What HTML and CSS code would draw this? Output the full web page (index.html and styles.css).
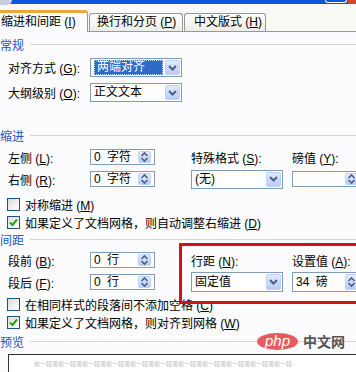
FILE: index.html
```html
<!DOCTYPE html>
<html lang="zh-CN">

<head>
    <meta charset="UTF-8" />
    <meta name="viewport" content="width=device-width, initial-scale=1.0" />
    <title>段落</title>
    <link rel="stylesheet" href="styles.css">
</head>

<body>
    <div class="dialog">
        <!-- 标题栏底边 -->
        <div class="titlebar">
            <span class="tb-corner"></span>
            <span class="tb-fill"></span>
            <span class="tb-btn"></span>
            <span class="tb-close"></span>
        </div>
        <!-- 选项卡 -->
        <div class="tabs">
            <div class="tab t1 active">缩进和间距 (<u>I</u>)</div>
            <div class="tab t2">换行和分页 (<u>P</u>)</div>
            <div class="tab t3">中文版式 (<u>H</u>)</div>
        </div>

        <div class="panel">
            <div class="group">常规</div>
            <div class="row first">
                <span class="lbl">对齐方式 (<u>G</u>):</span>
                <div class="select w-md">
                    <span class="val"><span class="sel">两端对齐</span></span>
                    <span class="drop"><svg width="9" height="6" viewBox="0 0 9 6"><path d="M1 1l3.5 3.5L8 1" /></svg></span>
                </div>
            </div>
            <div class="row">
                <span class="lbl">大纲级别 (<u>O</u>):</span>
                <div class="select w-md">
                    <span class="val">正文文本</span>
                    <span class="drop"><svg width="9" height="6" viewBox="0 0 9 6"><path d="M1 1l3.5 3.5L8 1" /></svg></span>
                </div>
            </div>

            <div class="group g-indent">缩进</div>
            <div class="grid g1">
                <span class="lbl">左侧 (<u>L</u>):</span>
                <div class="spin"><span class="val">0 字符</span><span class="arrows"><svg width="9" height="12" viewBox="0 0 9 12"><path d="M1.5 5l3-3 3 3M1.5 7l3 3 3-3" /></svg></span></div>
                <span class="lbl">特殊格式 (<u>S</u>):</span>
                <span class="lbl">磅值 (<u>Y</u>):</span>

                <span class="lbl">右侧 (<u>R</u>):</span>
                <div class="spin"><span class="val">0 字符</span><span class="arrows"><svg width="9" height="12" viewBox="0 0 9 12"><path d="M1.5 5l3-3 3 3M1.5 7l3 3 3-3" /></svg></span></div>
                <div class="select w-md">
                    <span class="val">(无)</span>
                    <span class="drop"><svg width="9" height="6" viewBox="0 0 9 6"><path d="M1 1l3.5 3.5L8 1" /></svg></span>
                </div>
                <div class="spin wide"><span class="val"></span><span class="arrows"><svg width="9" height="12" viewBox="0 0 9 12"><path d="M1.5 5l3-3 3 3M1.5 7l3 3 3-3" /></svg></span></div>
            </div>

            <div class="check c1"><span class="box"></span><span>对称缩进 (<u>M</u>)</span></div>
            <div class="check"><span class="box on"><svg width="11" height="11" viewBox="0 0 11 11"><path d="M2 5.5l2.5 2.5L9 2.5" /></svg></span><span>如果定义了文档网格，则自动调整右缩进 (<u>D</u>)</span></div>

            <div class="group g-space">间距</div>
            <div class="grid g2">
                <span class="lbl">段前 (<u>B</u>):</span>
                <div class="spin"><span class="val">0 行</span><span class="arrows"><svg width="9" height="12" viewBox="0 0 9 12"><path d="M1.5 5l3-3 3 3M1.5 7l3 3 3-3" /></svg></span></div>
                <span class="lbl">行距 (<u>N</u>):</span>
                <span class="lbl">设置值 (<u>A</u>):</span>

                <span class="lbl">段后 (<u>F</u>):</span>
                <div class="spin"><span class="val">0 行</span><span class="arrows"><svg width="9" height="12" viewBox="0 0 9 12"><path d="M1.5 5l3-3 3 3M1.5 7l3 3 3-3" /></svg></span></div>
                <div class="select w-md tall">
                    <span class="val">固定值</span>
                    <span class="drop"><svg width="9" height="6" viewBox="0 0 9 6"><path d="M1 1l3.5 3.5L8 1" /></svg></span>
                </div>
                <div class="spin wide tall"><span class="val">34 磅</span><span class="arrows"><svg width="9" height="12" viewBox="0 0 9 12"><path d="M1.5 5l3-3 3 3M1.5 7l3 3 3-3" /></svg></span></div>
            </div>

            <div class="check c3"><span class="box"></span><span>在相同样式的段落间不添加空格 (<u>C</u>)</span></div>
            <div class="check"><span class="box on"><svg width="11" height="11" viewBox="0 0 11 11"><path d="M2 5.5l2.5 2.5L9 2.5" /></svg></span><span>如果定义了文档网格，则对齐到网格 (<u>W</u>)</span></div>

            <div class="group g-preview">预览</div>
            <div class="preview">
                <p>前一段落前一段落前一段落前一段落前一段落前一段落前一段落前一段落前一段落前一段落前一段</p>
            </div>
        </div>

        <!-- 红框标注 -->
        <div class="mark"></div>
        <!-- 水印 -->
        <div class="logo"><span class="php">php</span><span class="cn">中文网</span></div>
    </div>
</body>

</html>
```

FILE: styles.css
```css
* {
    margin: 0;
    padding: 0;
    box-sizing: border-box;
}

body {
    width: 356px;
    height: 372px;
    overflow: hidden;
    background-color: #fcfcfe;
    font-family: "Liberation Sans", "Noto Sans CJK SC", sans-serif;
    font-size: 12px;
    color: #000;
}

u {
    text-decoration: underline;
    text-underline-offset: 1px;
}

.dialog {
    position: relative;
    height: 372px;
    overflow: hidden;
}

/* 标题栏 */
.titlebar {
    display: flex;
    height: 4px;
    background-color: #0b55d9;
}

.tb-corner {
    width: 12px;
    height: 5px;
    background-color: #c7d0e2;
    border-bottom-right-radius: 8px;
}

.tb-fill {
    flex: 1;
}

.tb-btn {
    width: 22px;
    height: 3px;
    border: 1px solid #fff;
    border-top: 0;
    border-radius: 0 0 3px 3px;
    margin-right: 1px;
}

.tb-close {
    width: 8px;
    background-color: #d8452a;
}

/* 选项卡 */
.tabs {
    display: flex;
    align-items: flex-end;
    height: 28px;
    background-color: #f9f9f5;
    border-bottom: 1px solid #919b9c;
}

.tab {
    height: 18px;
    line-height: 17px;
    border: 1px solid #919b9c;
    border-bottom: 0;
    border-radius: 3px 3px 0 0;
    background: linear-gradient(#ffffff, #eeede7);
    white-space: nowrap;
    margin-left: 1px;
}

.t1 {
    width: 88px;
    padding-left: 1px;
}

.t2 {
    width: 94px;
    padding-left: 7px;
}

.t3 {
    width: 82px;
    padding-left: 9px;
}

.tab.active {
    height: 22px;
    margin-left: 0;
    margin-bottom: -1px;
    line-height: 18px;
    background: #fcfcfe;
    border-left: 0;
    border-top: 3px solid #f0a53a;
    border-radius: 0 3px 0 0;
}

/* 面板 */
.panel {
    padding-left: 8px;
}

.group {
    display: flex;
    align-items: center;
    height: 16px;
    margin: 4px 0 0 -8px;
    color: #2155c5;
}

.group::after {
    content: "";
    flex: 1;
    height: 1px;
    margin-left: 6px;
    background-color: #d5d4c6;
}

.g-indent {
    margin-top: 25px;
}

.g-space {
    margin-top: 2px;
}

.g-preview {
    margin-top: 4px;
}

.row {
    display: flex;
    align-items: center;
    height: 19px;
    margin-top: 6px;
}

.lbl {
    width: 82px;
    white-space: nowrap;
}

.grid {
    display: grid;
    grid-template-columns: 82px 101px 101px 1fr;
    align-items: center;
    row-gap: 5px;
    margin-top: 6px;
}

.g1 {
    grid-template-rows: 16px 18px;
}

.g2 {
    grid-template-rows: 16px 20px;
    row-gap: 4px;
    margin-top: 5px;
}

/* 下拉框 */
.select {
    display: flex;
    align-items: center;
    height: 19px;
    padding: 1px;
    border: 1px solid #7f9db9;
    background-color: #fff;
}

.w-md {
    width: 92px;
}

.tall {
    height: 20px;
}

.select .val {
    flex: 1;
    padding-left: 2px;
    line-height: 15px;
    white-space: nowrap;
}

.sel {
    display: inline-block;
    width: 69px;
    padding-left: 3px;
    background-color: #316ac5;
    color: #fff;
    outline: 1px dotted #c8d6f0;
    outline-offset: -1px;
}

.drop,
.arrows {
    display: flex;
    align-items: center;
    justify-content: center;
    align-self: stretch;
    width: 15px;
    border: 1px solid #c0d0f6;
    border-radius: 2px;
    background: linear-gradient(#e3eafd, #b9cbf5);
}

.drop path {
    fill: none;
    stroke: #4b5f8a;
    stroke-width: 2;
}

/* 微调框 */
.spin {
    display: flex;
    align-items: center;
    width: 65px;
    height: 16px;
    padding: 1px;
    border: 1px solid #7f9db9;
    background-color: #fff;
}

.spin.wide {
    width: 70px;
}

.spin.tall {
    height: 20px;
}

.spin .val {
    flex: 1;
    padding-left: 2px;
    line-height: 13px;
    white-space: pre;
    word-spacing: 3px;
}

.arrows {
    width: 13px;
    margin-right: 2px;
}

.arrows path {
    fill: none;
    stroke: #4b5f8a;
    stroke-width: 1.6;
}

/* 复选框 */
.check {
    display: flex;
    align-items: center;
    gap: 5px;
    height: 14px;
    margin: 4px 0 0 -1px;
    white-space: nowrap;
}

.c1 {
    margin-top: 9px;
}

.c3 {
    margin-top: 5px;
}

.box {
    display: flex;
    align-items: center;
    justify-content: center;
    width: 13px;
    height: 13px;
    border: 1px solid #1c5180;
    background: linear-gradient(135deg, #dcdcd5, #ffffff);
}

.box path {
    fill: none;
    stroke: #21a121;
    stroke-width: 2;
}

/* 预览 */
.preview {
    height: 40px;
    margin: 5px -10px 0 0;
    border: 1px solid #333;
    border-right: 0;
    background-color: #fff;
}

.preview p {
    padding: 5px 0 0 25px;
    font-family: "Noto Sans CJK SC", sans-serif;
    font-size: 6px;
    line-height: 8px;
    color: #bdbdbd;
    white-space: nowrap;
    overflow: hidden;
    width: 305px;
}

/* 红框 */
.mark {
    position: absolute;
    left: 179px;
    top: 243px;
    width: 200px;
    height: 61px;
    border: 3px solid #c8161d;
}

/* 水印 */
.logo {
    position: absolute;
    left: 257px;
    top: 331px;
    display: flex;
    align-items: center;
    gap: 5px;
}

.php {
    width: 41px;
    height: 17px;
    border-radius: 50%;
    background-color: #e65c5e;
    color: #fff;
    font-family: "Liberation Sans", sans-serif;
    font-style: italic;
    font-size: 15px;
    line-height: 16px;
    text-align: center;
}

.cn {
    font-family: "Noto Sans CJK SC", sans-serif;
    color: #555;
    font-size: 14px;
    font-weight: bold;
}
```
